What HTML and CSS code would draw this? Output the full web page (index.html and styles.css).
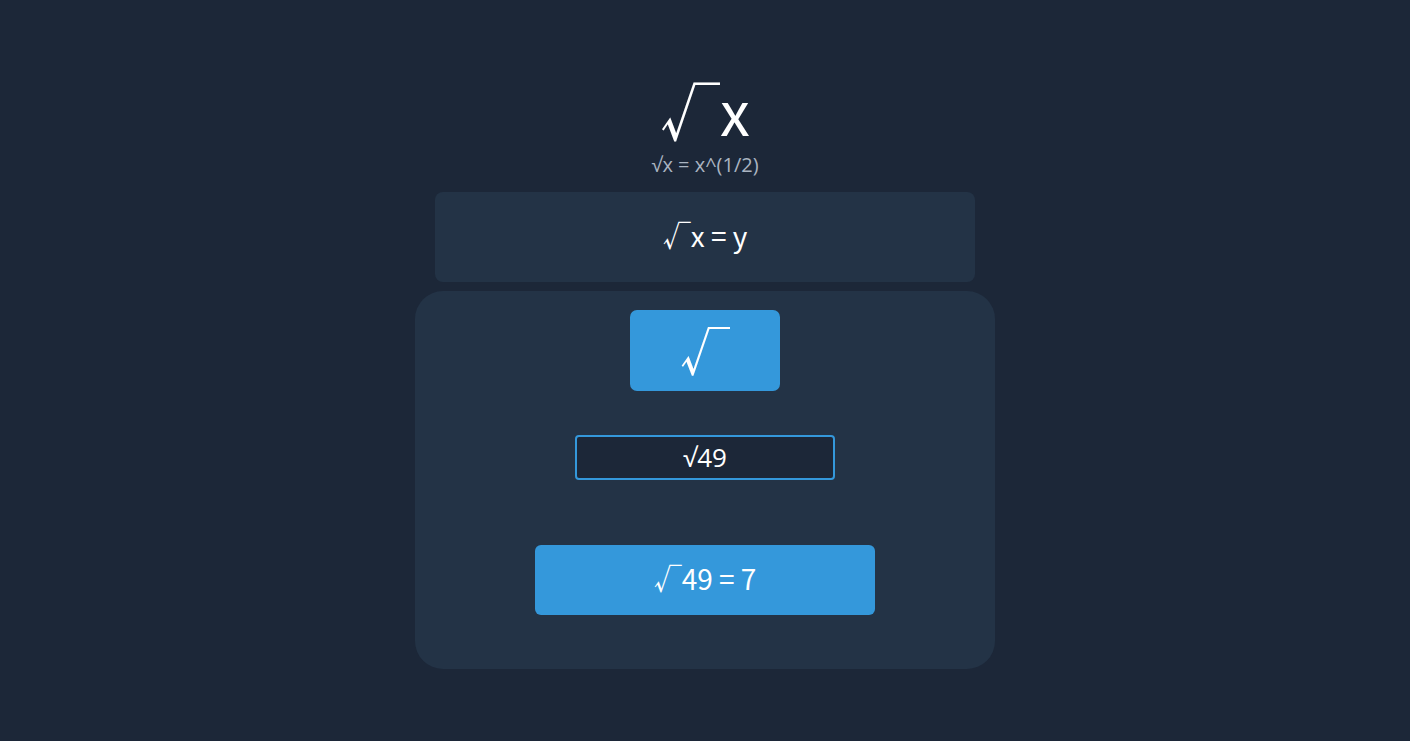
FILE: index.html
```html
<!DOCTYPE html>
<html>
<head>
<meta charset="utf-8">
<title>Square Root</title>
<link rel="stylesheet" href="styles.css">
</head>
<body>
<main class="app">
  <h1 class="title">√x</h1>
  <p class="subtitle">√x = x^(1/2)</p>
  <div class="formula">√x = y</div>
  <section class="panel">
    <button class="op-btn">√</button>
    <input class="num-input" type="text" value="√49">
    <div class="result">√49 = 7</div>
  </section>
</main>
</body>
</html>
```
FILE: styles.css
```css
body {
  margin: 0;
  background: #1c2738;
  color: #ffffff;
  font-family: "Open Sans", sans-serif;
}
.app {
  display: flex;
  flex-direction: column;
  align-items: center;
  padding-top: 70px;
}
.title {
  margin: 0;
  font-family: "Noto Sans CJK SC", sans-serif;
  font-size: 60px;
  font-weight: 400;
  line-height: 80px;
}
.subtitle {
  margin: 0;
  font-family: "Open Sans", sans-serif;
  font-size: 20px;
  line-height: 30px;
  color: #aab4c1;
}
.formula {
  margin-top: 12px;
  width: 540px;
  height: 90px;
  box-sizing: border-box;
  padding-bottom: 4px;
  background: #233346;
  border-radius: 8px;
  display: flex;
  align-items: center;
  justify-content: center;
  font-family: "Noto Sans CJK SC", sans-serif;
  font-size: 28px;
}
.panel {
  margin-top: 9px;
  width: 580px;
  height: 378px;
  box-sizing: border-box;
  background: #233346;
  border-radius: 28px;
  display: flex;
  flex-direction: column;
  align-items: center;
  padding-top: 19px;
}
.op-btn {
  width: 150px;
  height: 81px;
  padding: 0 0 4px;
  border: none;
  border-radius: 7px;
  background: #3498db;
  color: #ffffff;
  font-family: "Noto Sans CJK SC", sans-serif;
  font-size: 50px;
  cursor: pointer;
}
.num-input {
  margin-top: 44px;
  width: 260px;
  height: 45px;
  box-sizing: border-box;
  border: 2px solid #3498db;
  border-radius: 4px;
  background: #1c2738;
  color: #ffffff;
  text-align: center;
  font-family: "Open Sans", sans-serif;
  font-size: 26px;
  padding: 0 0 2px;
  outline: none;
}
.result {
  margin-top: 65px;
  width: 340px;
  height: 70px;
  box-sizing: border-box;
  padding-bottom: 5px;
  background: #3498db;
  border-radius: 6px;
  display: flex;
  align-items: center;
  justify-content: center;
  font-family: "Noto Sans CJK SC", sans-serif;
  font-size: 28px;
}
```
